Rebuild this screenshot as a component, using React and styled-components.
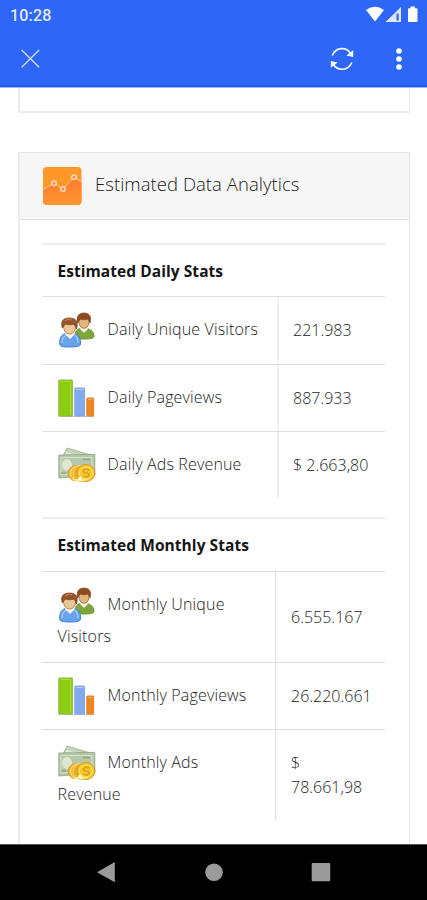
import React from "react";
import styled, { createGlobalStyle } from "styled-components";

const GlobalStyle = createGlobalStyle`
  * { box-sizing: border-box; }
  body { margin: 0; background: #fff; }
`;

const Screen = styled.div`
  display: flex;
  flex-direction: column;
  width: 427px;
  height: 900px;
  overflow: hidden;
  background: #fff;
  font-family: "Open Sans", "Noto Sans", sans-serif;
  color: #3c3c3c;
`;

const TopBar = styled.header`
  flex: none;
  height: 88px;
  background: #2e66f8;
  border-bottom: 1px solid #9db8fb;
  box-shadow: inset 0 -2px 0 #2058ee;
`;

const StatusBar = styled.div`
  display: flex;
  justify-content: space-between;
  height: 30px;
  padding: 6px 7px 0 10px;
`;

const Clock = styled.span`
  font: 500 16px/19px Roboto, sans-serif;
  letter-spacing: 0.2px;
  color: #e3ebff;
`;

const StatusIcons = styled.svg`
  display: block;
  width: 54px;
  height: 18px;
`;

const Toolbar = styled.div`
  display: flex;
  align-items: center;
  height: 57px;
  padding: 0 23px 0 21px;
`;

const CloseIcon = styled.svg`
  width: 19px;
  height: 19px;
  margin-right: auto;
`;

const RefreshIcon = styled.svg`
  width: 24px;
  height: 24px;
  margin-right: 40px;
`;

const MenuIcon = styled.svg`
  width: 10px;
  height: 24px;
`;

const Content = styled.main`
  flex: 1;
  min-height: 0;
  overflow: hidden;
  padding: 0 17px 0 18px;
`;

const PreviousCard = styled.div`
  height: 25px;
  border: 2px solid #ececec;
  border-top: 0;
  border-right-width: 1px;
  margin-bottom: 39px;
`;

const Card = styled.section`
  height: 720px;
  border: 1px solid #e4e4e4;
  border-left: 2px solid #ebebeb;
`;

const CardHeader = styled.div`
  display: flex;
  align-items: center;
  height: 67px;
  padding-left: 22px;
  background: #f6f6f6;
  border-bottom: 1px solid #dedede;
`;

const AnalyticsIcon = styled.svg`
  width: 40px;
  height: 40px;
  margin-right: 13px;
`;

const Title = styled.h1`
  margin: 0 0 4px;
  font-size: 18.5px;
  font-weight: 300;
  line-height: 26px;
  letter-spacing: 0.04px;
  color: #222;
`;

const Stats = styled.div`
  width: 343px;
  margin: ${(p) => p.$top}px 0 0 22px;
`;

const StatsHeading = styled.h2`
  height: ${(p) => (p.$wide ? 53 : 54)}px;
  margin: 0;
  padding: 0 15px 0 15.5px;
  border-top: 2px solid #ebeeee;
  font-size: 15.5px;
  font-weight: 700;
  line-height: 53px;
  letter-spacing: 0.06px;
  color: #151515;
`;

const Row = styled.div`
  display: grid;
  grid-template-columns: ${(p) => p.$split}px 1fr;
  min-height: ${(p) => p.$height}px;
  border-top: 1px solid #dfdfdf;
`;

const Label = styled.div`
  padding: 14px 13px 0 15.6px;
  border-right: ${(p) => (p.$wide ? "2px solid #f0f0f0" : "1px solid #dfdfdf")};
  font-size: 16px;
  font-weight: 300;
  line-height: 24px;
  letter-spacing: 0.15px;
  color: #222;
`;

const Value = styled.div`
  display: flex;
  align-items: center;
  padding: 0 13px 1px ${(p) => (p.$wide ? 14 : 15)}px;
  font-size: 16px;
  font-weight: 300;
  line-height: 24px;
  color: #222;
`;

const StatIcon = styled.svg`
  display: inline-block;
  width: 38px;
  height: 38px;
  margin-right: 12px;
  vertical-align: -13.7px;
`;

const NavBar = styled.footer`
  flex: none;
  height: 56px;
  background: #000;
  border-top: 1px solid #555;
`;

const NavIcons = styled.svg`
  display: block;
  width: 427px;
  height: 55px;
`;

function Users() {
  return (
    <StatIcon viewBox="0 0 38 38">
      <path d="M17 25c0-5 3-8 8-8 6 0 11 3 11 8 0 2-2 3-10 3-6 0-9-1-9-3z" fill="#7fa63a" stroke="#6f9638" />
      <path d="M22 18l4 4 4-4-1-4h-6z" fill="#f7eee0" />
      <ellipse cx="26" cy="10.5" rx="5.2" ry="6.8" fill="#e3b57c" stroke="#8b5428" strokeWidth=".7" />
      <path d="M19.6 12C18 5 21 2 26 2s8 3 6 10l-2-4c-3 1-6 1-8 0z" fill="#8f4a20" stroke="#70391a" strokeWidth=".6" />
      <path d="M1.7 32c0-7 3-10 10-10s11 3 11 10c0 3-2 4-11 4s-10-1-10-4z" fill="#67a3ec" stroke="#4484ca" />
      <path d="M4 32c0-4 2-7 5-8M20 32c0-4-1-6-3-8" fill="none" stroke="#a7d0ff" strokeWidth="1.3" />
      <path d="M7 23l5 5 5-5-2-4H9z" fill="#fff4e6" />
      <ellipse cx="11.6" cy="16" rx="6" ry="7" fill="#edc794" stroke="#a2622f" strokeWidth=".7" />
      <path d="M4.4 17C2 10 5.5 7 11.5 7c7 0 9 4 7 11l-2.4-5c-3 1-6 1-9 0z" fill="#96552a" stroke="#743c1b" strokeWidth=".7" />
      <path d="M7 10c2-2 5-2 7-1" fill="none" stroke="#b9773f" strokeWidth="1.4" />
    </StatIcon>
  );
}

function Bars() {
  return (
    <StatIcon viewBox="0 0 38 38">
      <path d="M.5 37.4h36" stroke="#bcbcbc" />
      <rect x=".8" y="1" width="13.6" height="36" rx=".6" fill="#8bcd10" stroke="#8fbb45" />
      <path d="M2.3 2.5h10.5V36" fill="none" stroke="#a9dc38" />
      <rect x="16.8" y="9" width="9.8" height="28" rx=".8" fill="#82aaf0" stroke="#86a4dc" />
      <path d="M18.3 10.5h7" stroke="#b8d4ff" />
      <rect x="28.8" y="19" width="6.8" height="18" rx=".6" fill="#f1871c" stroke="#dc8330" />
      <path d="M30.2 20.5h4" stroke="#ffb061" />
    </StatIcon>
  );
}

function Money() {
  return (
    <StatIcon viewBox="0 0 38 38">
      <path d="M5 10L9 2l27 8v18H5z" fill="#c5d5b7" stroke="#9aae8e" strokeWidth=".8" />
      <path d="M8 7l21 5" stroke="#e6eddc" strokeWidth="1.5" />
      <path d="M.8 9l36-.6V29L.8 32z" fill="#b5c8a9" stroke="#8ca382" strokeWidth=".8" />
      <path d="M3 11.5h31V27L3 29z" fill="none" stroke="#d6e2cb" />
      <ellipse cx="9" cy="19" rx="5" ry="6" fill="#dfe7d3" />
      <path d="M25 13.5h7M3 27h5" stroke="#8fa585" strokeWidth="1.6" />
      <ellipse cx="18" cy="27.2" rx="8" ry="7.5" fill="#eeb42c" stroke="#d39a2c" />
      <ellipse cx="20.5" cy="27.2" rx="8" ry="7.5" fill="#f2bc38" stroke="#fae184" />
      <ellipse cx="23.5" cy="27.5" rx="8" ry="8" fill="#eaab25" stroke="#f5d266" />
      <ellipse cx="28" cy="27" rx="9" ry="8.5" fill="#f6c62d" stroke="#d39a22" />
      <ellipse cx="28" cy="27" rx="6.4" ry="6" fill="none" stroke="#ffe573" />
      <path d="M32 24c-4-2-8 0-6 2.5 1 1 4 0 5 2s-3 3.5-6 1.5" fill="none" stroke="#dc9f1a" strokeWidth="1.5" />
      <path d="M14 33h17l-4 2H17z" fill="#ffe983" />
      <circle cx="22" cy="32.5" r="1.8" fill="#fffbe6" />
    </StatIcon>
  );
}

const icons = { users: Users, bars: Bars, money: Money };

const daily = [
  { icon: "users", label: "Daily Unique Visitors", value: "221.983", height: 68 },
  { icon: "bars", label: "Daily Pageviews", value: "887.933", height: 67 },
  { icon: "money", label: "Daily Ads Revenue", value: "$ 2.663,80", height: 68 },
];

const monthly = [
  { icon: "users", label: "Monthly Unique Visitors", value: "6.555.167", height: 91 },
  { icon: "bars", label: "Monthly Pageviews", value: "26.220.661", height: 67 },
  { icon: "money", label: "Monthly Ads Revenue", value: "$ 78.661,98", height: 91 },
];

function StatsTable({ heading, rows, split, top, wide }) {
  return (
    <Stats $top={top}>
      <StatsHeading $wide={wide}>{heading}</StatsHeading>
      {rows.map((row) => {
        const Icon = icons[row.icon];
        return (
          <Row key={row.label} $split={split} $height={row.height}>
            <Label $wide={wide}>
              <Icon />
              {row.label}
            </Label>
            <Value $wide={wide}>{row.value}</Value>
          </Row>
        );
      })}
    </Stats>
  );
}

export default function App() {
  return (
    <Screen>
      <GlobalStyle />
      <TopBar>
        <StatusBar>
          <Clock>10:28</Clock>
          <StatusIcons viewBox="0 0 54 18" fill="#fff">
            <path d="M0 4Q9-2.4 18 4L9 15.6z" />
            <path d="M19.5 16L35 1v15z" fill="#dce6ff" />
            <path d="M30.5 7.5h2.2v7h-2.2z" fill="#2e66f8" />
            <path d="M42 3.3q0-1.1 1.1-1.1h1.5V.5h4.2v1.7h1.6q1.1 0 1.1 1.1v11.6q0 1.2-1.2 1.2h-7.1q-1.2 0-1.2-1.2z" />
          </StatusIcons>
        </StatusBar>
        <Toolbar>
          <CloseIcon viewBox="0 0 19 19" fill="none" stroke="#d4e0ff" strokeWidth="1.3">
            <path d="M.7 1l17.4 17.2M18.1 1L.7 18.2" />
          </CloseIcon>
          <RefreshIcon viewBox="0 0 24 24" fill="none" stroke="#f2f6ff" strokeWidth="1.7">
            <path d="M2.3 8.5C6-.2 17-.4 20.8 7M21.8 15.5C18 24.3 7 24.2 3.2 17" />
            <path d="M23.2 3.3v6.8l-6.8-1.6zM.8 20.7v-6.8l6.8 1.6z" fill="#fff" stroke="none" />
          </RefreshIcon>
          <MenuIcon viewBox="0 0 10 24" fill="#fff">
            <circle cx="5" cy="4" r="2.8" />
            <circle cx="5" cy="12" r="2.8" />
            <circle cx="5" cy="20" r="2.8" />
          </MenuIcon>
        </Toolbar>
      </TopBar>
      <Content>
        <PreviousCard />
        <Card>
          <CardHeader>
            <AnalyticsIcon viewBox="0 0 40 40">
              <defs>
                <linearGradient id="area" x2="0" y2="1">
                  <stop stopColor="#ff792c" />
                  <stop offset="1" stopColor="#ff9632" />
                </linearGradient>
              </defs>
              <rect x="1" y="1" width="38.5" height="38" rx="4" fill="#ff9828" />
              <path d="M1 23.5l11-6.3 9 5.9 11-12 7.5 5V35q0 4-4 4H5q-4 0-4-4z" fill="url(#area)" />
              <path d="M1 23.5l11-6.3 9 5.9 11-12 7.5 5" fill="none" stroke="#ffc7a0" />
              <g fill="#ff8d38" stroke="#ffdcc0" strokeWidth="1.5">
                <circle cx="12" cy="17.2" r="2.3" />
                <circle cx="21" cy="23.1" r="2.3" />
                <circle cx="32" cy="11.2" r="2.3" />
              </g>
            </AnalyticsIcon>
            <Title>Estimated Data Analytics</Title>
          </CardHeader>
          <StatsTable heading="Estimated Daily Stats" rows={daily} split={237} top={23} wide />
          <StatsTable heading="Estimated Monthly Stats" rows={monthly} split={234} top={18} />
        </Card>
      </Content>
      <NavBar>
        <NavIcons viewBox="0 0 427 55" fill="#9b9b9b">
          <path d="M97 27.2l17.8-10.2v20.2z" />
          <circle cx="214" cy="27.3" r="8.8" />
          <rect x="311.7" y="18" width="18.5" height="18.3" rx="1" />
        </NavIcons>
      </NavBar>
    </Screen>
  );
}
